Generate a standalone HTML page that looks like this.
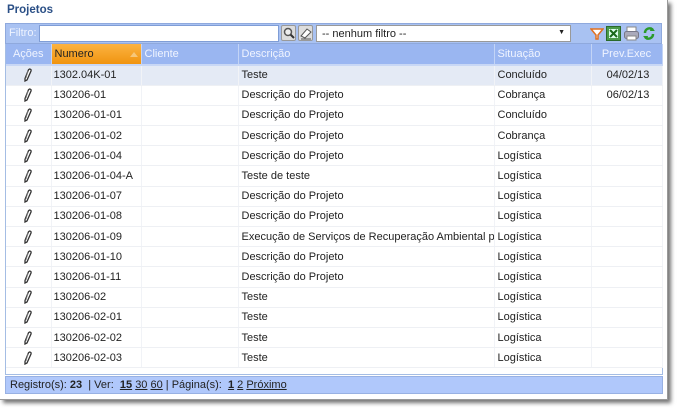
<!DOCTYPE html>
<html><head><meta charset="utf-8">
<style>
*{box-sizing:border-box;margin:0;padding:0}
body{width:677px;height:408px;background:#fff;font-family:"Liberation Sans",Arial,sans-serif;font-size:11px;color:#222;position:relative;overflow:hidden}
.frame{position:absolute;left:0;top:0;width:668px;height:400px;background:#fff;border-right:1px solid #999;border-bottom:1px solid #999;box-shadow:3px 3px 4px rgba(0,0,0,.55)}
.title{position:absolute;left:7px;top:4px;font-weight:bold;color:#2a4f86;font-size:11.5px}
.fbar{position:absolute;left:5px;top:23px;width:657px;height:21px;background:#a9c2f2;border:1px solid #8fa9dd}
.fbar .lbl{position:absolute;left:3px;top:3px;color:#eef3ff}
.fin{position:absolute;left:33px;top:1px;width:240px;height:17px;background:#fff;border:1px solid #7f9dd6}
.ib{position:absolute;top:1px;width:15px;height:16px;background:#ddd;border:1px solid #999;border-radius:2px}
.sel{position:absolute;left:310px;top:1px;width:255px;height:17px;background:#fff;border:1px solid #999;padding:2px 5px;font-size:11px}
.sel:after{content:"▼";position:absolute;right:5px;top:3px;font-size:7px}
.grid{position:absolute;left:5px;top:44px;width:658px;height:331px;border:1px solid #a4bde4;border-top:none}
table{border-collapse:collapse;table-layout:fixed;width:656px}
th{height:21px;background:#9ab6f1;color:#f0f4ff;font-weight:normal;text-align:left;padding-left:3px;border-right:1px solid #c3d4f6;border-bottom:2px solid #c8d7f5;font-size:11px}
th.sort{background:linear-gradient(#fcb341,#f09410);color:#222;position:relative}
th.sort:after{content:"";position:absolute;right:3px;top:8px;border-left:4px solid transparent;border-right:4px solid transparent;border-bottom:5px solid #f6c77a}
td{height:20.2px;padding-left:3px;border-bottom:1px solid #eef0f4;border-right:1px solid #f1f3f7;white-space:nowrap;overflow:hidden;font-size:11px}
td:nth-child(2){padding-left:2px}
tr.h td{background:#e4eaf5}
td.a{text-align:center;padding:0}
td.a svg{vertical-align:middle}
td.c{text-align:center}
.foot{position:absolute;left:5px;top:376px;width:658px;height:18px;background:#b0c8fb;border:1px solid #98b1e3;padding:2px 4px;font-size:11px;color:#222}
.foot a{color:#222;text-decoration:underline}
</style></head><body>
<div class="frame"></div>
<div class="title">Projetos</div>
<div class="fbar">
<span class="lbl">Filtro:</span>
<div class="fin"></div>
<div class="ib" style="left:275px"><svg width="13" height="14"><circle cx="6" cy="6" r="3.5" fill="#eee" stroke="#555" stroke-width="1.5"/><line x1="8.5" y1="8.5" x2="12" y2="12" stroke="#333" stroke-width="2"/></svg></div>
<div class="ib" style="left:292px"><svg width="13" height="14"><path d="M2 10 L8 3 L12 6 L6 12 Z" fill="#fff" stroke="#555"/><line x1="2" y1="13" x2="12" y2="13" stroke="#555"/></svg></div>
<div class="sel">-- nenhum filtro --</div>
<svg style="position:absolute;left:584px;top:3px" width="14" height="14"><path d="M1 2 H13 L8 8 V12 H6 V8 Z" fill="#fff" stroke="#e07020" stroke-width="1.5"/></svg>
<svg style="position:absolute;left:600px;top:2px" width="15" height="15"><rect x="0.5" y="0.5" width="14" height="14" fill="#4a9a4a" stroke="#2a6a2a"/><rect x="3" y="3" width="9" height="9" fill="#dfe"/><path d="M4 4 L11 11 M11 4 L4 11" stroke="#1a6a1a" stroke-width="2"/></svg>
<svg style="position:absolute;left:618px;top:2px" width="15" height="15"><rect x="3" y="1" width="9" height="5" fill="#fff" stroke="#888"/><rect x="0.5" y="5.5" width="14" height="7" rx="2" fill="#aab" stroke="#778"/><rect x="3" y="10" width="9" height="4" fill="#fff" stroke="#888"/></svg>
<svg style="position:absolute;left:636px;top:2px" width="14" height="15"><path d="M3 7 A4.5 4.5 0 0 1 11 4 M11 8 A4.5 4.5 0 0 1 3 11" fill="none" stroke="#2a9a2a" stroke-width="2.5"/><path d="M9 1 L13 5 L8 5Z M5 14 L1 10 L6 10Z" fill="#2a9a2a"/></svg>
</div>
<svg width="0" height="0" style="position:absolute"><defs><symbol id="p" viewBox="0 0 8 14"><path d="M5.5 1 Q7.5 1 7 3 L3 12 L1 13 L1 10.5 L4.5 1.8 Z" fill="#fff" stroke="#333" stroke-width="1.3"/><path d="M4 3 L2 10" stroke="#777" stroke-width="0.8"/></symbol></defs></svg>
<div class="grid">
<table>
<colgroup><col style="width:45px"><col style="width:90px"><col style="width:97px"><col style="width:256px"><col style="width:97px"><col style="width:71px"></colgroup>
<tr><th style="text-align:center;padding:0">Ações</th><th class="sort">Numero</th><th>Cliente</th><th>Descrição</th><th>Situação</th><th style="text-align:center;padding:0">Prev.Exec</th></tr>
<tr class="h"><td class="a"><svg width="8" height="14"><use href="#p"/></svg></td><td>1302.04K-01</td><td></td><td>Teste</td><td>Concluído</td><td class="c">04/02/13</td></tr>
<tr><td class="a"><svg width="8" height="14"><use href="#p"/></svg></td><td>130206-01</td><td></td><td>Descrição do Projeto</td><td>Cobrança</td><td class="c">06/02/13</td></tr>
<tr><td class="a"><svg width="8" height="14"><use href="#p"/></svg></td><td>130206-01-01</td><td></td><td>Descrição do Projeto</td><td>Concluído</td><td></td></tr>
<tr><td class="a"><svg width="8" height="14"><use href="#p"/></svg></td><td>130206-01-02</td><td></td><td>Descrição do Projeto</td><td>Cobrança</td><td></td></tr>
<tr><td class="a"><svg width="8" height="14"><use href="#p"/></svg></td><td>130206-01-04</td><td></td><td>Descrição do Projeto</td><td>Logística</td><td></td></tr>
<tr><td class="a"><svg width="8" height="14"><use href="#p"/></svg></td><td>130206-01-04-A</td><td></td><td>Teste de teste</td><td>Logística</td><td></td></tr>
<tr><td class="a"><svg width="8" height="14"><use href="#p"/></svg></td><td>130206-01-07</td><td></td><td>Descrição do Projeto</td><td>Logística</td><td></td></tr>
<tr><td class="a"><svg width="8" height="14"><use href="#p"/></svg></td><td>130206-01-08</td><td></td><td>Descrição do Projeto</td><td>Logística</td><td></td></tr>
<tr><td class="a"><svg width="8" height="14"><use href="#p"/></svg></td><td>130206-01-09</td><td></td><td>Execução de Serviços de Recuperação Ambiental por</td><td>Logística</td><td></td></tr>
<tr><td class="a"><svg width="8" height="14"><use href="#p"/></svg></td><td>130206-01-10</td><td></td><td>Descrição do Projeto</td><td>Logística</td><td></td></tr>
<tr><td class="a"><svg width="8" height="14"><use href="#p"/></svg></td><td>130206-01-11</td><td></td><td>Descrição do Projeto</td><td>Logística</td><td></td></tr>
<tr><td class="a"><svg width="8" height="14"><use href="#p"/></svg></td><td>130206-02</td><td></td><td>Teste</td><td>Logística</td><td></td></tr>
<tr><td class="a"><svg width="8" height="14"><use href="#p"/></svg></td><td>130206-02-01</td><td></td><td>Teste</td><td>Logística</td><td></td></tr>
<tr><td class="a"><svg width="8" height="14"><use href="#p"/></svg></td><td>130206-02-02</td><td></td><td>Teste</td><td>Logística</td><td></td></tr>
<tr><td class="a"><svg width="8" height="14"><use href="#p"/></svg></td><td>130206-02-03</td><td></td><td>Teste</td><td>Logística</td><td></td></tr>
</table>
</div>
<div class="foot">Registro(s): <b>23</b> &nbsp;| Ver: &nbsp;<a><b>15</b></a> <a>30</a> <a>60</a> | Página(s): &nbsp;<a><b>1</b></a> <a>2</a> <a>Próximo</a></div>
</body></html>
